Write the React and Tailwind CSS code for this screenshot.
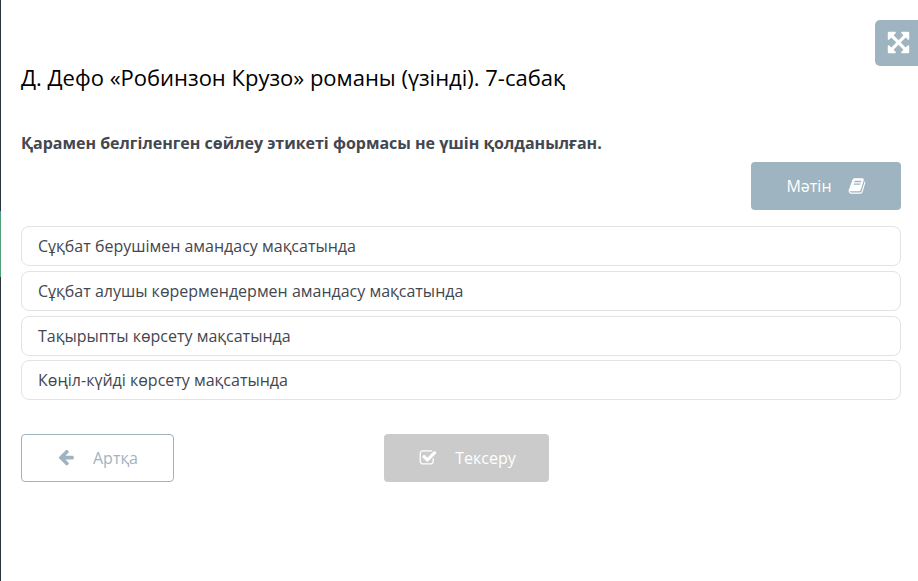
import React, { useState } from 'react'
import clsx from 'clsx'

const ANSWERS = [
  'Сұқбат берушімен амандасу мақсатында',
  'Сұқбат алушы көрермендермен амандасу мақсатында',
  'Тақырыпты көрсету мақсатында',
  'Көңіл-күйді көрсету мақсатында',
]

const ICONS = {
  expand: 'M1411 541l-355 355 355 355 144-144q29-31 70-14 39 17 39 59v448q0 26-19 45t-45 19h-448q-42 0-59-40-17-39 14-69l144-144-355-355-355 355 144 144q31 30 14 69-17 40-59 40h-448q-26 0-45-19t-19-45v-448q0-42 40-59 39-17 69 14l144 144 355-355-355-355-144 144q-19 19-45 19-12 0-24-5-40-17-40-59v-448q0-26 19-45t45-19h448q42 0 59 40 17 39-14 69l-144 144 355 355 355-355-144-144q-31-30-14-69 17-40 59-40h448q26 0 45 19t19 45v448q0 42-39 59-13 5-25 5-26 0-45-19z',
  book: 'M1703 478q40 57 18 129l-275 906q-19 64-76.5 107.5t-122.5 43.5h-923q-77 0-148.5-53.5t-99.5-131.5q-24-67-2-127 0-4 3-27t4-37q1-8-3-21.5t-3-19.5q2-11 8-21t16.5-23.5 16.5-23.5q23-38 45-91.5t30-91.5q3-10 .5-30t-.5-28q3-11 17-28t17-23q21-36 42-92t25-90q1-9-2.5-32t.5-28q4-13 22-30.5t22-22.5q19-26 42.5-84.5t27.5-96.5q1-8-3-25.5t-2-26.5q2-8 9-18t18-23 17-21q8-12 16.5-30.5t15-35 16-36 19.5-32 26.5-23.5 36-11.5 47.5 5.5l-1 3q38-9 51-9h761q74 0 114 56t18 130l-274 906q-36 119-71.5 153.5t-128.5 34.5h-869q-27 0-38 15-11 16-1 43 24 70 144 70h923q29 0 56-15.5t35-41.5l300-987q7-22 5-57 38 15 59 43zm-1064 2q-4 13 2 22.5t20 9.5h608q13 0 25.5-9.5t16.5-22.5l21-64q4-13-2-22.5t-20-9.5h-608q-13 0-25.5 9.5t-16.5 22.5zm-83 256q-4 13 2 22.5t20 9.5h608q13 0 25.5-9.5t16.5-22.5l21-64q4-13-2-22.5t-20-9.5h-608q-13 0-25.5 9.5t-16.5 22.5z',
  back: 'M1664 896v128q0 53-32.5 90.5t-84.5 37.5h-704l293 294q38 36 38 90t-38 90l-75 76q-37 37-90 37-52 0-91-37l-651-652q-37-37-37-90 0-52 37-91l651-650q38-38 91-38 52 0 90 38l75 74q38 38 38 91t-38 91l-293 293h704q52 0 84.5 37.5t32.5 90.5z',
  check: 'M1472 930v318q0 119-84.5 203.5t-203.5 84.5h-832q-119 0-203.5-84.5t-84.5-203.5v-832q0-119 84.5-203.5t203.5-84.5h832q63 0 117 25 15 7 18 23 3 17-9 29l-49 49q-10 10-23 10-3 0-9-2-23-6-45-6h-832q-66 0-113 47t-47 113v832q0 66 47 113t113 47h832q66 0 113-47t47-113v-254q0-13 9-22l64-64q10-10 23-10 6 0 12 3 20 8 20 29zm231-489l-814 814q-24 24-57 24t-57-24l-430-430q-24-24-24-57t24-57l110-110q24-24 57-24t57 24l263 263 647-647q24-24 57-24t57 24l110 110q24 24 24 57t-24 57z',
}

function Icon({ name, className }) {
  return (
    <svg viewBox="0 0 1792 1792" fill="currentColor" className={clsx('shrink-0', className)} aria-hidden="true">
      <path d={ICONS[name]} />
    </svg>
  )
}

export default function App() {
  const [selected, setSelected] = useState(null)

  return (
    <div className="flex h-[581px] w-[918px] overflow-hidden bg-white font-['Open_Sans','Noto_Sans',sans-serif] text-[#434750]">
      {/* Sidebar edge with the active item */}
      <div className="flex w-px shrink-0 flex-col bg-[#29343f] pt-[211px]">
        <div className="h-[66px] bg-[#4f9f78]" />
      </div>

      <main className="flex flex-1 flex-col pl-5">
        <div className="flex justify-end pt-5">
          <button aria-label="Толық экран" className="flex h-[46px] w-[43px] items-center justify-center rounded-l-[5px] bg-[#9fb4c1] pb-px pl-[3px] text-white">
            <Icon name="expand" className="size-[25px]" />
          </button>
        </div>

        <div className="flex flex-col pr-[17px]">
          <h1 className="h-8 text-[22px] leading-[22px] text-black">Д. Дефо «Робинзон Крузо» романы (үзінді). 7-сабақ</h1>
          <p className="mt-[33px] text-base leading-6 font-bold tracking-[-0.01px]">
            Қарамен белгіленген сөйлеу этикеті формасы не үшін қолданылған.
          </p>

          <button className="mt-[7px] flex h-12 w-[150px] items-center justify-center gap-4 self-end rounded-[4px] bg-[#9fb4c1] text-base text-white">
            Мәтін
            <Icon name="book" className="mb-px size-[18px]" />
          </button>

          <div className="mt-4 flex flex-col gap-[4.8px]">
            {ANSWERS.map((answer, i) => (
              <button
                key={answer}
                onClick={() => setSelected(i)}
                className={clsx(
                  'h-10 rounded-[8px] border px-4 text-left text-base leading-6',
                  selected === i ? 'border-[#9fb4c1]' : 'border-[#e3e3e5]',
                )}
              >
                {answer}
              </button>
            ))}
          </div>

          <div className="mt-[33.6px] flex gap-[210px]">
            <button className="flex h-12 w-[153px] items-center justify-center gap-[18px] rounded-[4px] border border-[#9fb4c1] text-base text-[#9fb4c1]">
              <Icon name="back" className="mb-px size-[18px]" />
              Артқа
            </button>
            <button
              disabled={selected === null}
              className="flex h-12 w-[165px] items-center justify-center gap-[18px] rounded-[4px] bg-[#cbcbcb] pl-[2px] text-base text-white"
            >
              <Icon name="check" className="size-[18px]" />
              Тексеру
            </button>
          </div>
        </div>
      </main>
    </div>
  )
}
